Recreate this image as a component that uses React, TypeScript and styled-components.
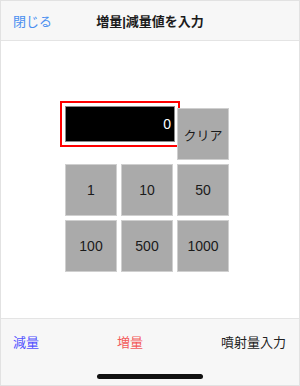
import React from "react";
import styled, { createGlobalStyle } from "styled-components";

const Global = createGlobalStyle`
  html, body { margin: 0; padding: 0; background: #fff; }
  body { font-family: "Liberation Sans", "Noto Sans CJK JP", sans-serif; }
  * { box-sizing: border-box; }
`;

const Page = styled.div`
  width: 300px;
  height: 386px;
  border: 1px solid #e2e2e2;
  display: flex;
  flex-direction: column;
  background: #fff;
  overflow: hidden;
`;

const Header = styled.header`
  height: 40px;
  flex: none;
  background: #f7f7f7;
  border-bottom: 1px solid #e4e4e4;
  display: grid;
  grid-template-columns: 1fr auto 1fr;
  align-items: center;
  padding: 0 12px;
`;

const HeaderLink = styled.span`
  font-size: 13px;
  color: #4a8ff0;
  justify-self: start;
`;

const Title = styled.h1`
  margin: 0;
  font-size: 13px;
  font-weight: 700;
  color: #1c1c1c;
`;

const Body = styled.main`
  flex: 1;
  padding: 67px 0 0 64px;
`;

const Pad = styled.div`
  display: grid;
  grid-template-columns: repeat(3, 52px);
  grid-auto-rows: 52px;
  gap: 4px;
`;

const Display = styled.div`
  grid-column: span 2;
  align-self: start;
  margin-top: -2px;
  width: 110px;
  height: 36px;
  background: #000;
  border: 1px solid #8a8a8a;
  color: #fff;
  font-size: 14px;
  display: flex;
  align-items: center;
  justify-content: flex-end;
  padding-right: 3px;
  outline: 2px solid #f00;
  outline-offset: 3px;
`;

const Key = styled.button<{ $small?: boolean }>`
  width: 52px;
  height: 52px;
  margin: 0;
  padding: 0;
  background: #aaaaaa;
  border: 1px solid #cfcfcf;
  border-radius: 0;
  font-family: "Liberation Sans", "Noto Sans CJK JP", sans-serif;
  font-size: ${(p) => (p.$small ? "13px" : "14px")};
  color: #1a1a1a;
  display: flex;
  align-items: center;
  justify-content: center;
`;

const Footer = styled.footer`
  height: 67px;
  flex: none;
  background: #f7f7f7;
  border-top: 1px solid #e4e4e4;
  display: flex;
  flex-direction: column;
  align-items: stretch;
`;

const Tabs = styled.nav`
  height: 44px;
  display: flex;
  align-items: center;
  justify-content: space-between;
  padding: 0 13px 0 12px;
`;

const Tab = styled.span<{ $color: string }>`
  font-size: 13px;
  color: ${(p) => p.$color};
`;

const HomeIndicator = styled.div`
  width: 106px;
  height: 5px;
  border-radius: 3px;
  background: #111;
  align-self: center;
  margin-top: 11px;
  margin-left: -1px;
`;

const keys = ["1", "10", "50", "100", "500", "1000"];

export default function App() {
  return (
    <>
      <Global />
      <Page>
        <Header>
          <HeaderLink>閉じる</HeaderLink>
          <Title>増量|減量値を入力</Title>
          <span />
        </Header>
        <Body>
          <Pad>
            <Display>0</Display>
            <Key $small>クリア</Key>
            {keys.map((k) => (
              <Key key={k}>{k}</Key>
            ))}
          </Pad>
        </Body>
        <Footer>
          <Tabs>
            <Tab $color="#5353ff">減量</Tab>
            <Tab $color="#f35b5b">増量</Tab>
            <Tab $color="#222">噴射量入力</Tab>
          </Tabs>
          <HomeIndicator />
        </Footer>
      </Page>
    </>
  );
}
